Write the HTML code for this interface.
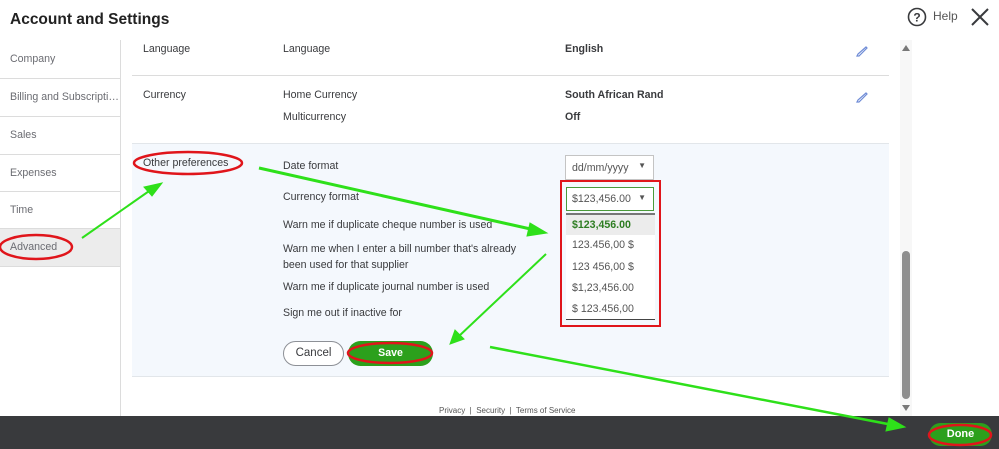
<!DOCTYPE html>
<html><head><meta charset="utf-8"><style>
*{margin:0;padding:0;box-sizing:border-box}
body{width:999px;height:449px;overflow:hidden;background:#fff;font-family:"Liberation Sans",sans-serif;color:#393a3d;position:relative}
.a{position:absolute;white-space:nowrap}
.t{font-size:10.6px}
.nav{position:absolute;left:0;width:120px;border-bottom:1px solid #dcdcdc;font-size:10.6px;color:#6b6c72;padding-left:10px;white-space:nowrap;overflow:hidden;text-overflow:ellipsis}
</style></head><body>
<div class="a" style="left:10px;top:11px;font-size:15.5px;font-weight:bold;color:#222">Account and Settings</div>
<svg class="a" style="left:907px;top:7px" width="20" height="20"><circle cx="10" cy="10" r="8.5" fill="none" stroke="#393a3d" stroke-width="1.6"/><text x="10" y="14.5" font-size="12" font-weight="bold" text-anchor="middle" fill="#393a3d" font-family="Liberation Sans">?</text></svg>
<div class="a" style="left:933px;top:9px;font-size:12px;color:#555">Help</div>
<svg class="a" style="left:970px;top:7px" width="20" height="20"><path d="M2 2L18 18M18 2L2 18" stroke="#393a3d" stroke-width="2"/></svg>

<div class="nav" style="top:40px;height:39px;line-height:38px">Company</div>
<div class="nav" style="top:79px;height:38px;line-height:37px">Billing and Subscripti…</div>
<div class="nav" style="top:117px;height:38px;line-height:37px">Sales</div>
<div class="nav" style="top:155px;height:37px;line-height:36px">Expenses</div>
<div class="nav" style="top:192px;height:37px;line-height:36px">Time</div>
<div class="nav" style="top:229px;height:38px;line-height:36px;background:#ececec">Advanced</div>
<div class="a" style="left:120px;top:40px;width:1px;height:376px;background:#dcdcdc"></div>

<div class="a t" style="left:143px;top:43px">Language</div>
<div class="a t" style="left:283px;top:43px">Language</div>
<div class="a t" style="left:565px;top:43px;font-weight:bold">English</div>
<div class="a" style="left:132px;top:75px;width:757px;height:1px;background:#dcdcdc"></div>
<div class="a t" style="left:143px;top:89px">Currency</div>
<div class="a t" style="left:283px;top:89px">Home Currency</div>
<div class="a t" style="left:283px;top:111px">Multicurrency</div>
<div class="a t" style="left:565px;top:89px;font-weight:bold">South African Rand</div>
<div class="a t" style="left:565px;top:111px;font-weight:bold">Off</div>
<svg class="a" style="left:855px;top:44px" width="14" height="14"><path d="M2 12L3 10L11 3L12 4L4 12Z" stroke="#6f8cd6" fill="none" stroke-width="1.2"/></svg>
<svg class="a" style="left:855px;top:90px" width="14" height="14"><path d="M2 12L3 10L11 3L12 4L4 12Z" stroke="#6f8cd6" fill="none" stroke-width="1.2"/></svg>

<div class="a" style="left:132px;top:143px;width:757px;height:234px;background:#f4f8fd;border-top:1px solid #e2e6ea;border-bottom:1px solid #e2e6ea"></div>
<div class="a t" style="left:143px;top:157px">Other preferences</div>
<div class="a t" style="left:283px;top:160px">Date format</div>
<div class="a t" style="left:283px;top:191px">Currency format</div>
<div class="a t" style="left:283px;top:219px">Warn me if duplicate cheque number is used</div>
<div class="a t" style="left:283px;top:242px;line-height:15.5px">Warn me when I enter a bill number that's already<br>been used for that supplier</div>
<div class="a t" style="left:283px;top:281px">Warn me if duplicate journal number is used</div>
<div class="a t" style="left:283px;top:307px">Sign me out if inactive for</div>

<div class="a t" style="left:565px;top:155px;width:89px;height:25px;border:1px solid #c4c4c4;background:#fff;padding:6px 0 0 6px;color:#555">dd/mm/yyyy<span style="position:absolute;right:7px;top:5px;font-size:8px">▼</span></div>
<div class="a t" style="left:566px;top:187px;width:88px;height:24px;border:1.5px solid #4a9a3a;background:#fff;padding:5px 0 0 5px;color:#555">$123,456.00<span style="position:absolute;right:7px;top:5px;font-size:8px">▼</span></div>
<div class="a" style="left:566px;top:213px;width:89px;height:107px;background:#fff;border-top:2px solid #777;border-bottom:1px solid #444"></div>
<div class="a t" style="left:566px;top:215px;width:89px;height:20px;background:#ececec;font-weight:bold;color:#2e7d22;padding:4px 0 0 6px">$123,456.00</div>
<div class="a t" style="left:572px;top:239px;color:#555">123.456,00 $</div>
<div class="a t" style="left:572px;top:261px;color:#555">123 456,00 $</div>
<div class="a t" style="left:572px;top:282px;color:#555">$1,23,456.00</div>
<div class="a t" style="left:572px;top:303px;color:#555">$ 123.456,00</div>
<div class="a" style="left:560px;top:180px;width:101px;height:147px;border:2.5px solid #e0151b"></div>

<div class="a t" style="left:283px;top:341px;width:61px;height:25px;border:1px solid #8d9096;border-radius:13px;background:#fff;text-align:center;line-height:23px;font-size:11.5px">Cancel</div>
<div class="a t" style="left:348px;top:341px;width:85px;height:25px;border-radius:13px;background:#2ca01c;color:#fff;text-align:center;line-height:25px;font-weight:bold">Save</div>

<div class="a" style="left:439px;top:406px;font-size:8px;color:#555">Privacy &nbsp;|&nbsp; Security &nbsp;|&nbsp; Terms of Service</div>

<div class="a" style="left:900px;top:40px;width:12px;height:376px;background:#f7f7f7"></div>
<div class="a" style="left:902px;top:45px;width:0;height:0;border-left:4px solid transparent;border-right:4px solid transparent;border-bottom:6px solid #777"></div>
<div class="a" style="left:902px;top:251px;width:8px;height:148px;background:#8e8e8e;border-radius:4px"></div>
<div class="a" style="left:902px;top:405px;width:0;height:0;border-left:4px solid transparent;border-right:4px solid transparent;border-top:6px solid #777"></div>

<div class="a" style="left:0;top:416px;width:999px;height:33px;background:#393a3d"></div>
<div class="a" style="left:929px;top:423px;width:63px;height:23px;border-radius:12px;background:#2ca01c;color:#fff;font-weight:bold;font-size:11px;text-align:center;line-height:23px">Done</div>

<svg class="a" style="left:0;top:0" width="999" height="449">
<g fill="none" stroke="#e0151b" stroke-width="2.5">
<ellipse cx="188" cy="163" rx="54" ry="11"/>
<ellipse cx="36" cy="247" rx="36" ry="12"/>
<ellipse cx="390" cy="353" rx="42" ry="10"/>
<ellipse cx="960" cy="435" rx="31" ry="10"/>
</g>
<g stroke="#2ee01a" fill="#2ee01a">
<line x1="82" y1="238" x2="152" y2="189" stroke-width="2"/>
<polygon points="162,183 144,187 152,196"/>
<line x1="259" y1="168" x2="535" y2="230" stroke-width="3"/>
<polygon points="547,233 530,223 527,236"/>
<line x1="546" y1="254" x2="458" y2="337" stroke-width="2"/>
<polygon points="450,344 455,330 464,339"/>
<line x1="490" y1="347" x2="893" y2="425" stroke-width="2.5"/>
<polygon points="905,427 889,418 886,431"/>
</g>
</svg>
</body></html>
